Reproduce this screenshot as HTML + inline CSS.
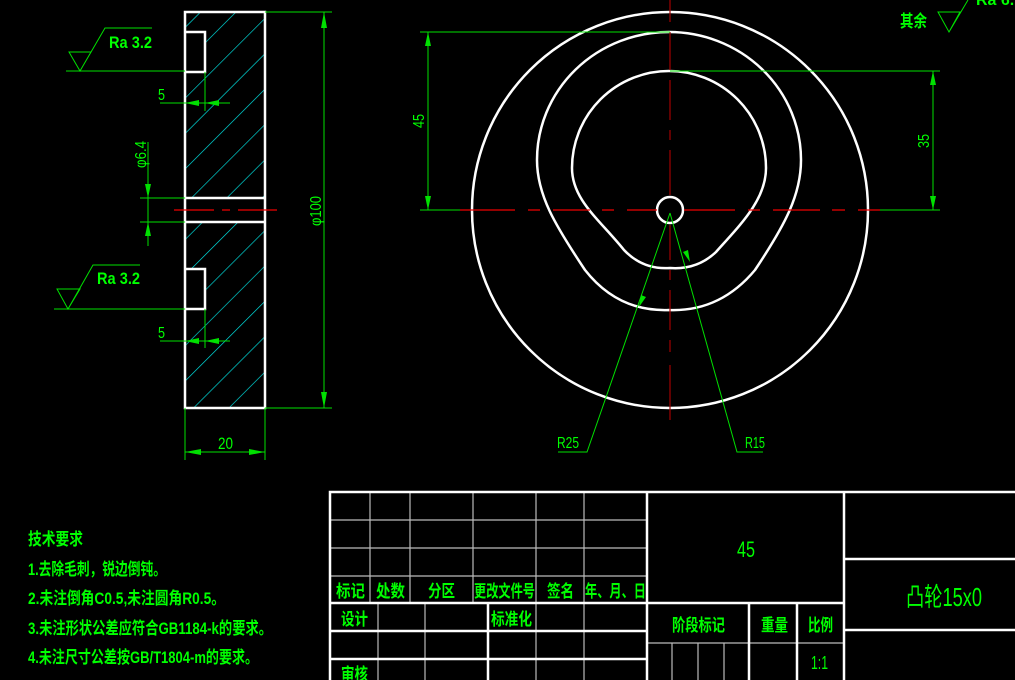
<!DOCTYPE html>
<html><head><meta charset="utf-8"><style>
html,body{margin:0;padding:0;background:#000;width:1015px;height:680px;overflow:hidden}
svg{display:block}
text{font-family:"Liberation Sans","Noto Sans CJK SC",sans-serif;fill:#00ff00}
</style></head><body>
<svg width="1015" height="680" viewBox="0 0 1015 680" xmlns="http://www.w3.org/2000/svg">
<defs>
<pattern id="h" width="25" height="25" patternUnits="userSpaceOnUse" patternTransform="rotate(45)">
<line x1="0" y1="0" x2="0" y2="25" stroke="#00e8e8" stroke-width="1.3"/>
</pattern>
</defs>
<rect width="1015" height="680" fill="#000"/>

<!-- LEFT VIEW -->
<rect x="185" y="12" width="80" height="186" fill="url(#h)"/>
<rect x="185" y="222" width="80" height="186" fill="url(#h)"/>
<rect x="185" y="32" width="20" height="40" fill="#000"/>
<rect x="185" y="269" width="20" height="40" fill="#000"/>
<g stroke="#fff" stroke-width="2.5" fill="none">
<rect x="185" y="12" width="80" height="396"/>
<path d="M185 32H205V72H185M185 269H205V309H185M185 198H265M185 222H265"/>
</g>
<g stroke="#e00" stroke-width="1.2"><path d="M174 210H214M222 210H230M238 210H277"/></g>
<g stroke="#00e000" stroke-width="1" fill="none">
<path d="M265 12H332M265 408H332M324 12V408"/>
<path d="M140 198H185M140 222H185M148 142V246"/>
<path d="M69 52H91L80 71ZM80 71L105 28H152M66 71H185"/>
<path d="M57 289H80L68 309ZM68 309L93 265H140M54 309H185"/>
<path d="M160 103H230M205 72V111M160 341H230M205 309V348"/>
<path d="M185 408V460M265 408V460M185 452H265"/>
</g>
<g fill="#00e000">
<path d="M324 12l-3 16h6z M324 408l-3-16h6z"/>
<path d="M148 198l-3-14h6z M148 222l-3 14h6z"/>
<path d="M185 103l14-3v6z M205 103l14-3v6z M185 341l14-3v6z M205 341l14-3v6z"/>
<path d="M185 452l16-3v6z M265 452l-16-3v6z"/>
</g>
<text x="109" y="48" font-size="17" font-weight="bold" textLength="43" lengthAdjust="spacingAndGlyphs">Ra 3.2</text>
<text x="97" y="284" font-size="17" font-weight="bold" textLength="43" lengthAdjust="spacingAndGlyphs">Ra 3.2</text>
<text x="158" y="100" font-size="16" textLength="7" lengthAdjust="spacingAndGlyphs">5</text>
<text x="158" y="338" font-size="16" textLength="7" lengthAdjust="spacingAndGlyphs">5</text>
<text x="218" y="449" font-size="17" textLength="15" lengthAdjust="spacingAndGlyphs">20</text>
<text transform="translate(321,226) rotate(-90)" font-size="16" textLength="30" lengthAdjust="spacingAndGlyphs">φ100</text>
<text transform="translate(146,168) rotate(-90)" font-size="16" textLength="27" lengthAdjust="spacingAndGlyphs">φ6.4</text>

<!-- RIGHT VIEW -->
<g stroke="#fff" stroke-width="2.5" fill="none">
<circle cx="670" cy="210" r="198"/>
<circle cx="670" cy="210" r="13"/>
<path d="M537 160A132 128 0 0 1 801 160C801 195 785 225 755 270Q720 312 669 310Q618 312 585 270C555 225 537 195 537 160Z"/>
<path d="M572 168A97 97 0 0 1 766 168C766 200 740 225 716 252Q697 270 670 268Q643 270 624 250C600 220 572 200 572 168Z"/>
</g>
<g stroke="#e00" stroke-width="1.2">
<path d="M460 210H515M528 210H540M553 210H590M602 210H614M627 210H657M684 210H735M748 210H760M773 210H820M832 210H845M858 210H880"/>
</g>
<g stroke="#a00000" stroke-width="1.2">
<path d="M670 0V22M670 32V70M670 80V120M670 130V140M670 150V195M670 225V260M670 270V280M670 290V330M670 340V352M670 365V420"/>
</g>
<g stroke="#00e000" stroke-width="1" fill="none">
<path d="M420 32H670M420 210H460M428 32V210"/>
<path d="M670 71H940M880 210H940M933 71V210"/>
<path d="M670 213L587 452H558M670 213L737 452H763"/>
<path d="M938 12H960L949 32ZM949 32L968 0"/>
</g>
<g fill="#00e000">
<path d="M428 32l-3 14h6z M428 210l-3-14h6z M933 71l-3 14h6z M933 210l-3-14h6z"/>
<path d="M641 295l-2 12 7-10z M683 252l7 10-2-12z"/>
</g>
<text transform="translate(424,128) rotate(-90)" font-size="16" textLength="14" lengthAdjust="spacingAndGlyphs">45</text>
<text transform="translate(929,148) rotate(-90)" font-size="16" textLength="14" lengthAdjust="spacingAndGlyphs">35</text>
<text x="557" y="448" font-size="16" textLength="22" lengthAdjust="spacingAndGlyphs">R25</text>
<text x="745" y="448" font-size="16" textLength="20" lengthAdjust="spacingAndGlyphs">R15</text>
<text x="900" y="27" font-size="17" font-weight="bold" textLength="27" lengthAdjust="spacingAndGlyphs">其余</text>
<text x="976" y="5" font-size="16" font-weight="bold">Ra 6.</text>

<!-- TECH -->
<g font-size="17" font-weight="bold">
<text x="28" y="545" textLength="55" lengthAdjust="spacingAndGlyphs">技术要求</text>
<text x="28" y="575" textLength="138" lengthAdjust="spacingAndGlyphs">1.去除毛刺，锐边倒钝。</text>
<text x="28" y="604" textLength="197" lengthAdjust="spacingAndGlyphs">2.未注倒角C0.5,未注圆角R0.5。</text>
<text x="28" y="634" textLength="244" lengthAdjust="spacingAndGlyphs">3.未注形状公差应符合GB1184-k的要求。</text>
<text x="28" y="663" textLength="230" lengthAdjust="spacingAndGlyphs">4.未注尺寸公差按GB/T1804-m的要求。</text>
</g>

<!-- TITLE BLOCK -->
<g stroke="#bbb" stroke-width="1.2" fill="none">
<path d="M330 520H647M330 548H647M330 576H647"/>
<path d="M370 492V603M410 492V603M473 492V603M536 492V603M584 492V603"/>
<path d="M378 603V680M425 603V680M536 603V680M584 603V680"/>
<path d="M647 643H844M672 643V680M698 643V680M724 643V680"/>
</g>
<g stroke="#fff" stroke-width="2.5" fill="none">
<path d="M330 680V492H1015M647 492V680M844 492V680"/>
<path d="M330 603H844M330 631H647M330 659H647M488 603V680"/>
<path d="M749 603V680M797 603V680M844 559H1015M844 630H1015"/>
</g>
<g font-size="17" font-weight="bold">
<text x="336" y="597" textLength="29" lengthAdjust="spacingAndGlyphs">标记</text>
<text x="376" y="597" textLength="29" lengthAdjust="spacingAndGlyphs">处数</text>
<text x="428" y="597" textLength="27" lengthAdjust="spacingAndGlyphs">分区</text>
<text x="474" y="597" textLength="61" lengthAdjust="spacingAndGlyphs">更改文件号</text>
<text x="547" y="597" textLength="27" lengthAdjust="spacingAndGlyphs">签名</text>
<text x="585" y="597" textLength="61" lengthAdjust="spacingAndGlyphs">年、月、日</text>
<text x="341" y="625" textLength="27" lengthAdjust="spacingAndGlyphs">设计</text>
<text x="491" y="625" textLength="41" lengthAdjust="spacingAndGlyphs">标准化</text>
<text x="341" y="680" textLength="27" lengthAdjust="spacingAndGlyphs">审核</text>
<text x="672" y="631" textLength="53" lengthAdjust="spacingAndGlyphs">阶段标记</text>
<text x="761" y="631" textLength="27" lengthAdjust="spacingAndGlyphs">重量</text>
<text x="808" y="631" textLength="25" lengthAdjust="spacingAndGlyphs">比例</text>
</g>
<text x="811" y="669" font-size="18" textLength="17" lengthAdjust="spacingAndGlyphs">1:1</text>
<text x="737" y="557" font-size="22" textLength="18" lengthAdjust="spacingAndGlyphs">45</text>
<text x="906" y="606" font-size="26" textLength="76" lengthAdjust="spacingAndGlyphs">凸轮15x0</text>
</svg>
</body></html>
